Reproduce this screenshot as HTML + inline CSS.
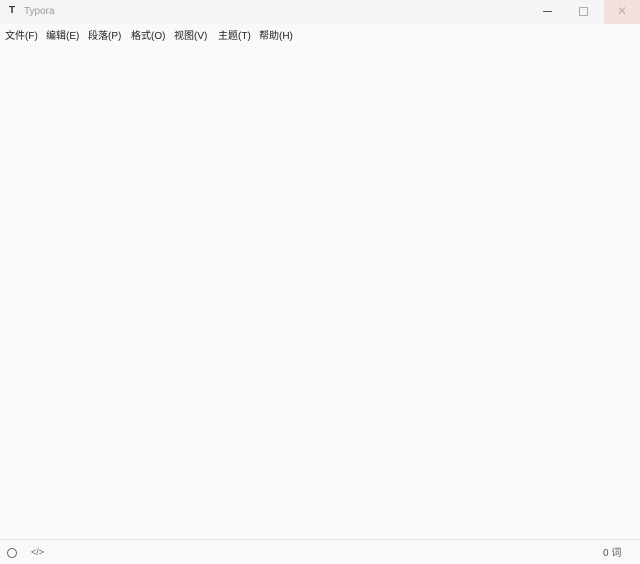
<!DOCTYPE html>
<html><head><meta charset="utf-8"><style>
body{margin:0;width:640px;height:564px;background:#f9f9f9;font-family:"Liberation Sans","Noto Sans CJK SC",sans-serif;position:relative;overflow:hidden;color:#222}
.t{position:absolute;top:0;left:0;width:640px;height:24px;background:#f5f5f5}
.t .n{position:absolute;left:24px;top:6px;font-size:10px;color:#999}
.t .T{position:absolute;left:9px;top:5px;font-size:10px;font-weight:bold;color:#333}
.x{position:absolute;right:0;top:0;width:36px;height:24px;background:#f4dfdf;color:#c9a9a9;font-size:12px;text-align:center;line-height:23px}
.m{position:absolute;top:27px;font-size:10px;color:#222;white-space:pre}
.s{position:absolute;top:539px;left:0;width:640px;border-top:1px solid #e6e6e6}
</style></head><body>
<div class="t"><span class="T">T</span><span class="n">Typora</span>
<div style="position:absolute;left:543px;top:11px;width:9px;height:1px;background:#555"></div>
<div style="position:absolute;left:579px;top:7px;width:7px;height:7px;border:1px solid #aaa;border-radius:1px"></div>
<div class="x">✕</div></div>
<div class="m" style="left:5px">文件(F)</div>
<div class="m" style="left:46px">编辑(E)</div>
<div class="m" style="left:88px">段落(P)</div>
<div class="m" style="left:131px">格式(O)</div>
<div class="m" style="left:174px">视图(V)</div>
<div class="m" style="left:218px">主题(T)</div>
<div class="m" style="left:259px">帮助(H)</div>
<div class="s"></div>
<div style="position:absolute;left:7px;top:548px;width:8px;height:8px;border:1px solid #666;border-radius:50%"></div>
<div style="position:absolute;left:31px;top:547px;font-size:9px;color:#555">&lt;/&gt;</div>
<div style="position:absolute;left:603px;top:544px;font-size:10px;color:#555">0 词</div>
</body></html>
